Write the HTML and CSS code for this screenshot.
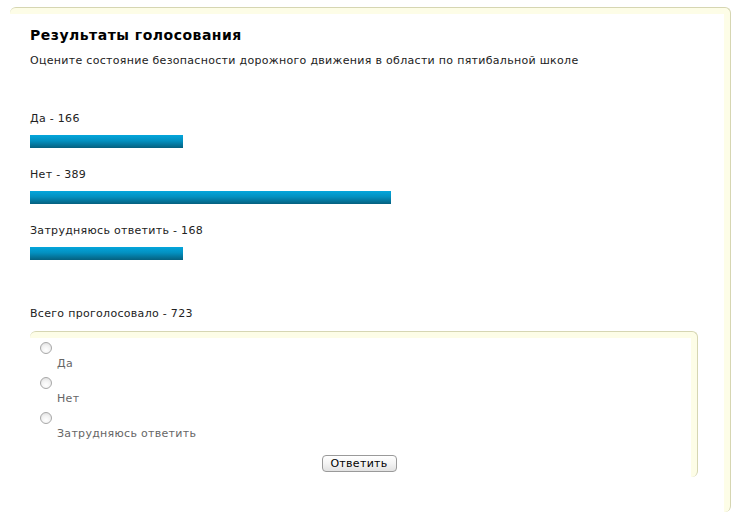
FILE: index.html
```html
<!DOCTYPE html>
<html lang="ru">
<head>
<meta charset="utf-8">
<title>Результаты голосования</title>
<link rel="stylesheet" href="styles.css">
</head>
<body>
<div class="panel">
  <div class="panel-body">
    <h2 class="title">Результаты голосования</h2>
    <p class="question">Оцените состояние безопасности дорожного движения в области по пятибальной школе</p>
    <div class="results">
      <div class="result">
        <div class="result-label">Да - 166</div>
        <div class="bar" style="width:153px"></div>
      </div>
      <div class="result">
        <div class="result-label">Нет - 389</div>
        <div class="bar" style="width:361px"></div>
      </div>
      <div class="result">
        <div class="result-label">Затрудняюсь ответить - 168</div>
        <div class="bar" style="width:153px"></div>
      </div>
    </div>
    <div class="total">Всего проголосовало - 723</div>
    <form class="vote">
      <div class="vote-body">
        <div class="option"><span class="radio"></span><span class="option-label">Да</span></div>
        <div class="option"><span class="radio"></span><span class="option-label">Нет</span></div>
        <div class="option"><span class="radio"></span><span class="option-label">Затрудняюсь ответить</span></div>
        <div class="actions"><button type="button" class="btn">Ответить</button></div>
      </div>
    </form>
  </div>
</div>
</body>
</html>
```
FILE: styles.css
```css
html, body {
  margin: 0;
  padding: 0;
  background: #ffffff;
}
body {
  font-family: "DejaVu Sans", Verdana, sans-serif;
  font-size: 11px;
  letter-spacing: 0.3px;
  color: #222222;
}
.panel {
  margin: 7px 0 0 10px;
  width: 720px;
  border-top: 1px solid #d6d6b2;
  border-right: 1px solid #d6d6b2;
  border-radius: 6px 6px 6px 0;
  background: #fdfde7;
}
.panel-body {
  margin: 6px 6px 0 0;
  background: #ffffff;
  padding: 13px 0 35px 20px;
}
.title {
  margin: 0;
  font-size: 14px;
  line-height: 16px;
  font-weight: bold;
  letter-spacing: 0.5px;
  color: #000000;
}
.question {
  margin: 11px 0 0 0;
  line-height: 14px;
}
.results {
  margin-top: 44px;
  display: flex;
  flex-direction: column;
  gap: 20px;
}
.result {
  display: flex;
  flex-direction: column;
  gap: 9px;
}
.result-label {
  line-height: 14px;
}
.bar {
  height: 13px;
  background: linear-gradient(to bottom, #04a6dc 0%, #0390c0 45%, #05607f 100%);
}
.total {
  margin-top: 47px;
  line-height: 14px;
}
.vote {
  margin: 10px 0 0 0;
  width: 667px;
  border-top: 1px solid #d6d6b2;
  border-right: 1px solid #d6d6b2;
  border-radius: 6px 6px 6px 0;
  background: #fdfde7;
}
.vote-body {
  margin: 6px 6px 0 0;
  background: #ffffff;
  padding: 4px 0 5px 10px;
  display: flex;
  flex-direction: column;
  gap: 6px;
}
.option {
  display: flex;
  flex-direction: column;
  align-items: flex-start;
  gap: 3px;
}
.radio {
  display: block;
  width: 10px;
  height: 10px;
  border: 1px solid #a8a8a8;
  border-radius: 50%;
  background: radial-gradient(circle at 50% 70%, #ffffff 0%, #f2f2f2 50%, #d8d8d8 100%);
}
.option-label {
  margin-left: 17px;
  line-height: 14px;
  color: #666666;
}
.actions {
  display: flex;
  justify-content: center;
  margin-top: 8px;
  padding-right: 13px;
}
.btn {
  font-family: "DejaVu Sans", Verdana, sans-serif;
  font-size: 11px;
  letter-spacing: 0.3px;
  line-height: 13px;
  width: 75px;
  height: 17px;
  padding: 0;
  color: #000000;
  border: 1px solid #9a9a9a;
  border-radius: 4px;
  background: linear-gradient(to bottom, #ffffff 0%, #f4f4f4 50%, #e2e2e2 100%);
}
```
